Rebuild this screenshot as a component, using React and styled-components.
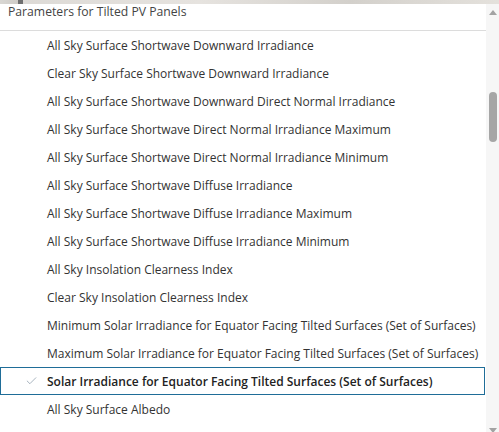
import React from "react";
import styled, { createGlobalStyle } from "styled-components";
import { Check } from "lucide-react";

const items = [
  "All Sky Surface Shortwave Downward Irradiance",
  "Clear Sky Surface Shortwave Downward Irradiance",
  "All Sky Surface Shortwave Downward Direct Normal Irradiance",
  "All Sky Surface Shortwave Direct Normal Irradiance Maximum",
  "All Sky Surface Shortwave Direct Normal Irradiance Minimum",
  "All Sky Surface Shortwave Diffuse Irradiance",
  "All Sky Surface Shortwave Diffuse Irradiance Maximum",
  "All Sky Surface Shortwave Diffuse Irradiance Minimum",
  "All Sky Insolation Clearness Index",
  "Clear Sky Insolation Clearness Index",
  "Minimum Solar Irradiance for Equator Facing Tilted Surfaces (Set of Surfaces)",
  "Maximum Solar Irradiance for Equator Facing Tilted Surfaces (Set of Surfaces)",
  "Solar Irradiance for Equator Facing Tilted Surfaces (Set of Surfaces)",
  "All Sky Surface Albedo",
];

const selectedIndex = 12;

const GlobalStyle = createGlobalStyle`
  html, body {
    margin: 0;
    padding: 0;
    background: #ffffff;
    overflow: hidden;
  }
  body {
    font-family: "Open Sans", "Noto Sans", sans-serif;
  }
`;

const Page = styled.div`
  width: 499px;
  height: 432px;
  display: flex;
  flex-direction: column;
  overflow: hidden;
`;

const MapStrip = styled.div`
  height: 4px;
  flex: none;
  background: linear-gradient(
    90deg,
    #d9d7d3 0%,
    #cfccc7 3.6%,
    #6f6f6f 3.6%,
    #6f6f6f 4.6%,
    #dddad6 4.6%,
    #e6e3df 40%,
    #d3d0cb 70%,
    #e4e1dc 100%
  );
`;

const Panel = styled.div`
  flex: 1;
  display: flex;
  min-height: 0;
`;

const ListArea = styled.div`
  flex: 1;
  min-width: 0;
  overflow: hidden;
  display: flex;
  flex-direction: column;
  background: #ffffff;
`;

const GroupTitle = styled.div`
  flex: none;
  height: 27px;
  padding-left: 8px;
  font-size: 12.2px;
  line-height: 16px;
  color: #444444;
  border-bottom: 1px solid #dcdcdc;
  box-sizing: border-box;
`;

const Option = styled.div`
  height: 28px;
  flex: none;
  display: flex;
  align-items: center;
  box-sizing: border-box;
  padding-left: ${(p) => (p.$selected ? "46px" : "47px")};
  font-size: 12px;
  color: ${(p) => (p.$selected ? "#222222" : "#333333")};
  font-weight: ${(p) => (p.$selected ? 600 : 400)};
  border: ${(p) => (p.$selected ? "1px solid #1f6d98" : "none")};
  margin-right: ${(p) => (p.$selected ? "1px" : "0")};
  position: relative;
  white-space: nowrap;
`;

const Tick = styled.span`
  position: absolute;
  left: 24px;
  top: 50%;
  transform: translateY(-50%);
  display: flex;
  color: #8193a3;
`;

const ScrollTrack = styled.div`
  width: 13px;
  flex: none;
  background: #f6f6f6;
  display: flex;
  flex-direction: column;
  align-items: center;
  padding-top: 6px;
  box-sizing: border-box;
`;

const Arrow = styled.div`
  width: 0;
  height: 0;
  border-left: 4px solid transparent;
  border-right: 4px solid transparent;
  ${(p) =>
    p.$down
      ? "border-top: 5px solid #a3a3a3;"
      : "border-bottom: 5px solid #a3a3a3;"}
`;

const Thumb = styled.div`
  width: 8px;
  height: 50px;
  border-radius: 4px;
  background: #a6a6a6;
  margin-top: 77px;
`;

const Spacer = styled.div`
  flex: 1;
`;

const BottomArrow = styled.div`
  margin-bottom: -1px;
`;

export default function App() {
  return (
    <>
      <GlobalStyle />
      <Page>
        <MapStrip />
        <Panel>
          <ListArea>
            <GroupTitle>Parameters for Tilted PV Panels</GroupTitle>
            {items.map((label, i) => (
              <Option key={label} $selected={i === selectedIndex}>
                {i === selectedIndex && (
                  <Tick>
                    <Check size={13} strokeWidth={1.3} />
                  </Tick>
                )}
                {label}
              </Option>
            ))}
          </ListArea>
          <ScrollTrack>
            <Arrow />
            <Thumb />
            <Spacer />
            <BottomArrow>
              <Arrow $down />
            </BottomArrow>
          </ScrollTrack>
        </Panel>
      </Page>
    </>
  );
}
